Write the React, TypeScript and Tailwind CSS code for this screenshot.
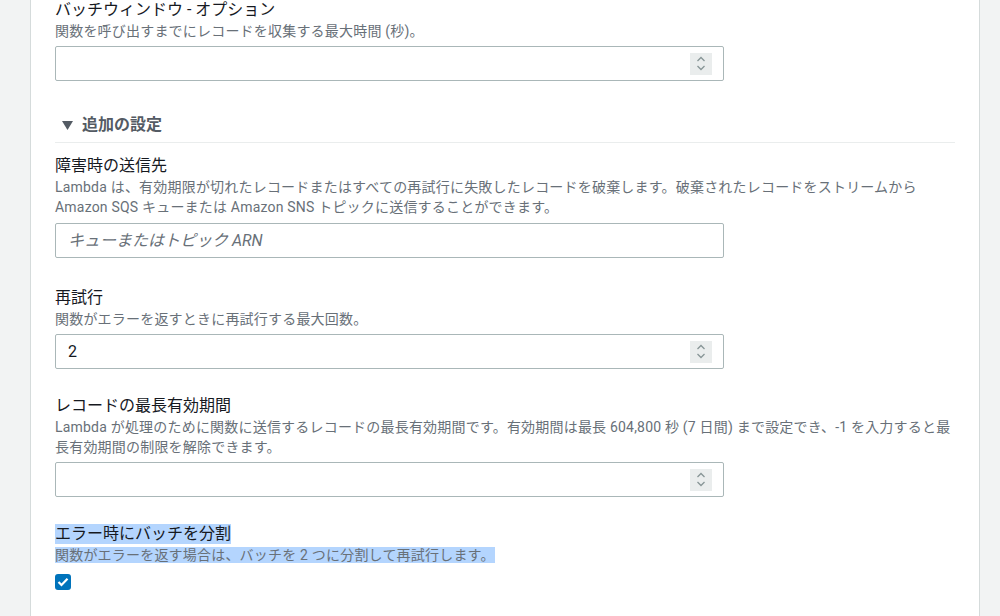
import React from "react";

const FONT = "font-['Roboto','Noto_Sans_CJK_JP',sans-serif]";

function Spinner() {
  return (
    <div className="flex h-[22px] w-[22px] flex-col items-center justify-center gap-[3px] bg-[#eaeded]">
      <svg width="10" height="6" viewBox="0 0 10 6" fill="none">
        <path d="M1.5 5L5 1.5L8.5 5" stroke="#879596" strokeWidth="1.3" />
      </svg>
      <svg width="10" height="6" viewBox="0 0 10 6" fill="none">
        <path d="M1.5 1L5 4.5L8.5 1" stroke="#879596" strokeWidth="1.3" />
      </svg>
    </div>
  );
}

function NumberInput({ value }: { value?: string }) {
  return (
    <div className="mt-[5px] flex h-[35px] w-[669px] items-center justify-between rounded-[2px] border border-[#aab7b8] bg-white pl-[12px] pr-[11px]">
      <span className="text-[16px] text-[#16191f]">{value ?? ""}</span>
      <Spinner />
    </div>
  );
}

function Label({ children }: { children: React.ReactNode }) {
  return <div className="text-[16px] leading-[22px] text-[#16191f]">{children}</div>;
}

function Desc({ children }: { children: React.ReactNode }) {
  return <div className="text-[14px] leading-[20px] tracking-[0.2px] text-[#687078]">{children}</div>;
}

export default function App() {
  return (
    <div className={`flex h-[616px] w-[1000px] overflow-hidden bg-[#f2f3f3] ${FONT}`}>
      <div className="w-[30px] shrink-0" />
      <div className="w-[950px] shrink-0 border-x border-[#d5dbdb] bg-white px-[24px]">
        {/* Batch window */}
        <div className="-mt-[1px]">
          <Label>バッチウィンドウ - オプション</Label>
          <Desc>関数を呼び出すまでにレコードを収集する最大時間 (秒)。</Desc>
          <NumberInput />
        </div>

        {/* Additional settings */}
        <div className="mt-[33px] flex items-center gap-[9px] border-b border-[#eaeded] pb-[6px] pl-[7px]">
          <svg width="11" height="9" viewBox="0 0 11 9">
            <polygon points="0,0 11,0 5.5,9" fill="#545b64" />
          </svg>
          <span className="text-[16px] font-bold leading-[22px] text-[#545b64]">追加の設定</span>
        </div>

        <div className="mt-[12px]">
          <Label>障害時の送信先</Label>
          <Desc>
            Lambda は、有効期限が切れたレコードまたはすべての再試行に失敗したレコードを破棄します。破棄されたレコードをストリームから
            Amazon SQS キューまたは Amazon SNS トピックに送信することができます。
          </Desc>
          <div className="mt-[6px] flex h-[35px] w-[669px] items-center rounded-[2px] border border-[#aab7b8] bg-white px-[12px]">
            <span className="text-[16px] italic text-[#687078]">キューまたはトピック ARN</span>
          </div>
        </div>

        <div className="mt-[29px]">
          <Label>再試行</Label>
          <Desc>関数がエラーを返すときに再試行する最大回数。</Desc>
          <NumberInput value="2" />
        </div>

        <div className="mt-[26px]">
          <Label>レコードの最長有効期間</Label>
          <Desc>
            Lambda が処理のために関数に送信するレコードの最長有効期間です。有効期間は最長 604,800 秒 (7 日間) まで設定でき、-1 を入力すると最長有効期間の制限を解除できます。
          </Desc>
          <NumberInput />
        </div>

        <div className="mt-[26px]">
          <div className="h-[22px] text-[16px] leading-[22px] text-[#16191f]">
            <span className="inline-block h-[20px] bg-[#b4d5fe] leading-[20px]">エラー時にバッチを分割</span>
          </div>
          <div className="h-[20px] text-[14px] leading-[20px] tracking-[0.2px] text-[#687078]">
            <span className="inline-block h-[16px] bg-[#b4d5fe] leading-[16px]">
              関数がエラーを返す場合は、バッチを 2 つに分割して再試行します。
            </span>
          </div>
          <div className="mt-[9px] flex h-[16px] w-[16px] items-center justify-center rounded-[3px] bg-[#0073bb]">
            <svg width="12" height="10" viewBox="0 0 12 10" fill="none">
              <path d="M1.5 5L4.5 8L10.5 1.8" stroke="white" strokeWidth="2.2" />
            </svg>
          </div>
        </div>
      </div>
      <div className="flex-1" />
    </div>
  );
}
